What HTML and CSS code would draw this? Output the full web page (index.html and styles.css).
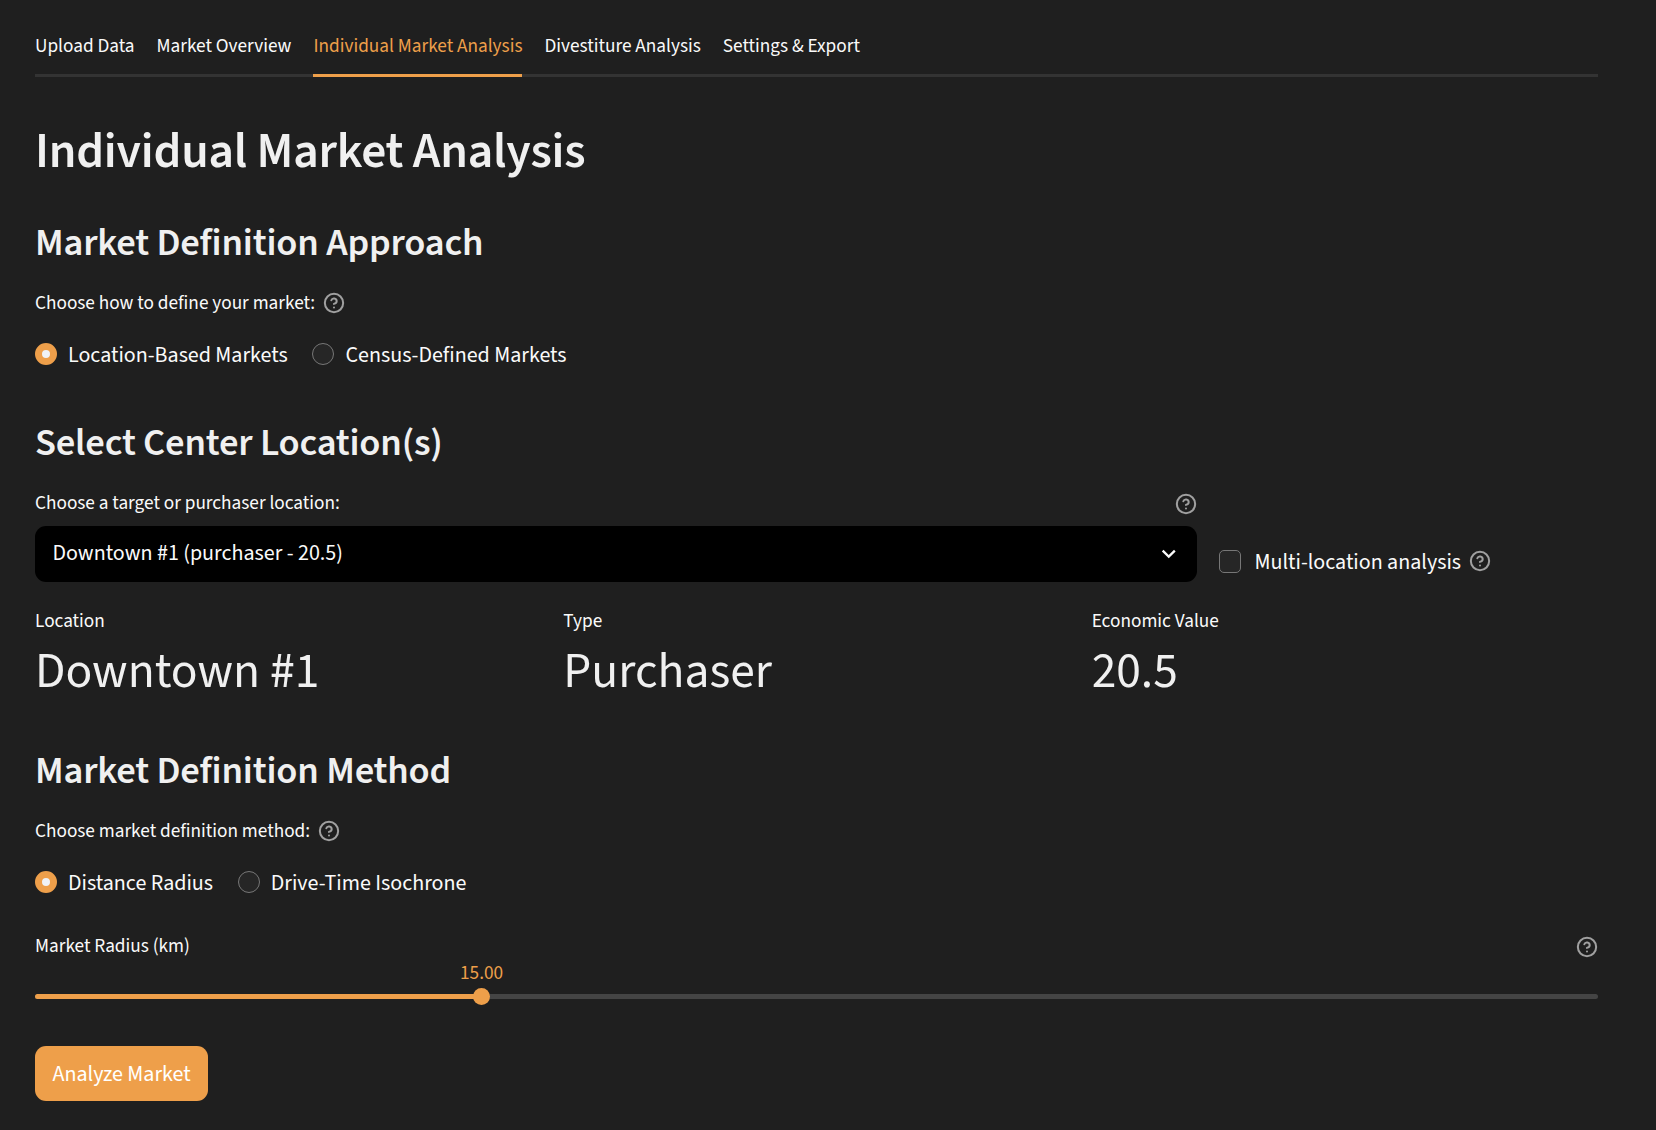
FILE: index.html
```html
<!DOCTYPE html>
<html lang="en">
<head>
<meta charset="utf-8">
<title>Individual Market Analysis</title>
<link rel="stylesheet" href="styles.css">
</head>
<body>
<svg width="0" height="0" class="defs">
  <symbol id="help" viewBox="0 0 24 24" fill="none" stroke="currentColor" stroke-width="2.2" stroke-linecap="round" stroke-linejoin="round">
    <circle cx="12" cy="12" r="10"/>
    <path d="M9.09 9a3 3 0 0 1 5.83 1c0 2-3 3-3 3"/>
    <path d="M12 17h.01"/>
  </symbol>
</svg>
<main class="page">
  <nav class="tabs">
    <a class="tab">Upload Data</a>
    <a class="tab">Market Overview</a>
    <a class="tab active">Individual Market Analysis</a>
    <a class="tab">Divestiture Analysis</a>
    <a class="tab">Settings &amp; Export</a>
  </nav>

  <h1 class="title">Individual Market Analysis</h1>

  <h2 class="heading">Market Definition Approach</h2>
  <div class="label">Choose how to define your market:<svg class="help"><use href="#help"/></svg></div>
  <div class="radios">
    <label class="option"><span class="radio checked"></span><span class="option-text">Location-Based Markets</span></label>
    <label class="option"><span class="radio"></span><span class="option-text">Census-Defined Markets</span></label>
  </div>

  <h2 class="heading location-heading">Select Center Location(s)</h2>
  <div class="location">
    <div>
      <div class="label spread">Choose a target or purchaser location:<svg class="help"><use href="#help"/></svg></div>
      <div class="select">
        <span>Downtown #1 (purchaser - 20.5)</span>
        <svg class="chevron" viewBox="0 0 24 24"><path fill="currentColor" d="M7.41 8.59 12 13.17l4.59-4.58L18 10l-6 6-6-6z"/></svg>
      </div>
    </div>
    <label class="multi"><span class="checkbox"></span><span class="option-text">Multi-location analysis</span><svg class="help"><use href="#help"/></svg></label>
  </div>

  <div class="metrics">
    <div><div class="metric-label">Location</div><div class="metric-value">Downtown #1</div></div>
    <div><div class="metric-label">Type</div><div class="metric-value">Purchaser</div></div>
    <div><div class="metric-label">Economic Value</div><div class="metric-value">20.5</div></div>
  </div>

  <h2 class="heading method-heading">Market Definition Method</h2>
  <div class="label">Choose market definition method:<svg class="help"><use href="#help"/></svg></div>
  <div class="radios">
    <label class="option"><span class="radio checked"></span><span class="option-text">Distance Radius</span></label>
    <label class="option"><span class="radio"></span><span class="option-text">Drive-Time Isochrone</span></label>
  </div>

  <div class="label spread slider-label">Market Radius (km)<svg class="help"><use href="#help"/></svg></div>
  <div class="slider">
    <div class="track"><div class="fill"></div></div>
    <div class="thumb"></div>
    <div class="slider-value">15.00</div>
  </div>

  <button class="button">Analyze Market</button>
</main>
</body>
</html>
```
FILE: styles.css
```css
* { box-sizing: border-box; }

body {
  margin: 0;
  background: #1f1f1f;
  color: #fafafa;
  font-family: "Source Sans 3", "Source Sans Pro", "Noto Sans CJK SC", sans-serif;
  font-size: 22px;
}

.defs { position: absolute; }

.page { width: 1598px; padding: 18px 0 0 35px; }

.tabs {
  display: flex;
  gap: 22px;
  height: 59px;
  box-shadow: inset 0 -3px #333;
  font-size: 19.25px;
  line-height: 56px;
}
.tab.active { color: #ee9f4a; border-bottom: 3px solid #ee9f4a; }

.title, .heading {
  margin: 0;
  color: #f0f0f0;
  font-weight: 600;
  letter-spacing: -0.005em;
}
.title { margin-top: 45px; font-size: 49.5px; line-height: 60px; }
.heading { margin-top: 38px; font-size: 38.5px; line-height: 46px; }
.location-heading { margin-top: 50px; }
.method-heading { margin-top: 46px; }

.label {
  display: flex;
  align-items: center;
  gap: 8px;
  height: 28px;
  margin-top: 23px;
  font-size: 19.25px;
  line-height: 28px;
}
.spread { justify-content: space-between; }
.spread .help { margin-top: 2px; }

.help { flex: none; width: 22px; height: 22px; color: #a0a0a0; }

.radios { display: flex; gap: 24.75px; margin-top: 21px; }
.option { display: flex; align-items: center; gap: 11px; height: 32px; }
.option-text { line-height: 32px; padding-top: 2px; }
.radio {
  width: 22px;
  height: 22px;
  border: 1px solid #777;
  border-radius: 50%;
  background: #262626;
}
.radio.checked { border: 7px solid #ee9f4a; background: #f0f2f6; }

.location { display: grid; grid-template-columns: 1162px 1fr; column-gap: 22px; }
.select {
  display: flex;
  align-items: center;
  justify-content: space-between;
  height: 56px;
  margin-top: 9px;
  padding: 0 15px 2px 17.5px;
  border-radius: 11px;
  background: #000;
}
.chevron { width: 27.5px; height: 27.5px; margin-top: 0.5px; }

.multi { display: flex; align-items: center; align-self: end; height: 32px; margin-bottom: 5px; }
.checkbox {
  width: 22px;
  height: 23px;
  margin-right: 13.5px;
  margin-top: 1px;
  border: 1px solid #777;
  border-radius: 5px;
  background: #262626;
}
.multi .help { margin-left: 7.5px; }

.metrics { display: grid; grid-template-columns: repeat(3, 1fr); column-gap: 22px; margin-top: 25px; }
.metric-label { font-size: 19.25px; line-height: 28px; }
.metric-value { margin-top: 7px; color: #f0f0f0; font-size: 49.5px; line-height: 60px; }

.slider-label { margin-top: 34px; }
.slider { position: relative; height: 39px; padding-top: 34px; }
.track { height: 5px; border-radius: 3px; background: #444; overflow: hidden; }
.fill { width: 28.57%; height: 100%; background: #ee9f4a; }
.thumb {
  position: absolute;
  left: 28.57%;
  top: 28px;
  width: 17px;
  height: 17px;
  margin-left: -8.5px;
  border-radius: 50%;
  background: #ee9f4a;
}
.slider-value {
  position: absolute;
  left: 28.57%;
  top: 1px;
  transform: translateX(-50%);
  color: #ee9f4a;
  font-size: 19.25px;
  line-height: 24px;
}

.button {
  display: block;
  height: 55px;
  margin-top: 47px;
  padding: 0 17.5px;
  border: 0;
  border-radius: 11px;
  background: #ee9f4a;
  color: #fff;
  font: inherit;
}
```
